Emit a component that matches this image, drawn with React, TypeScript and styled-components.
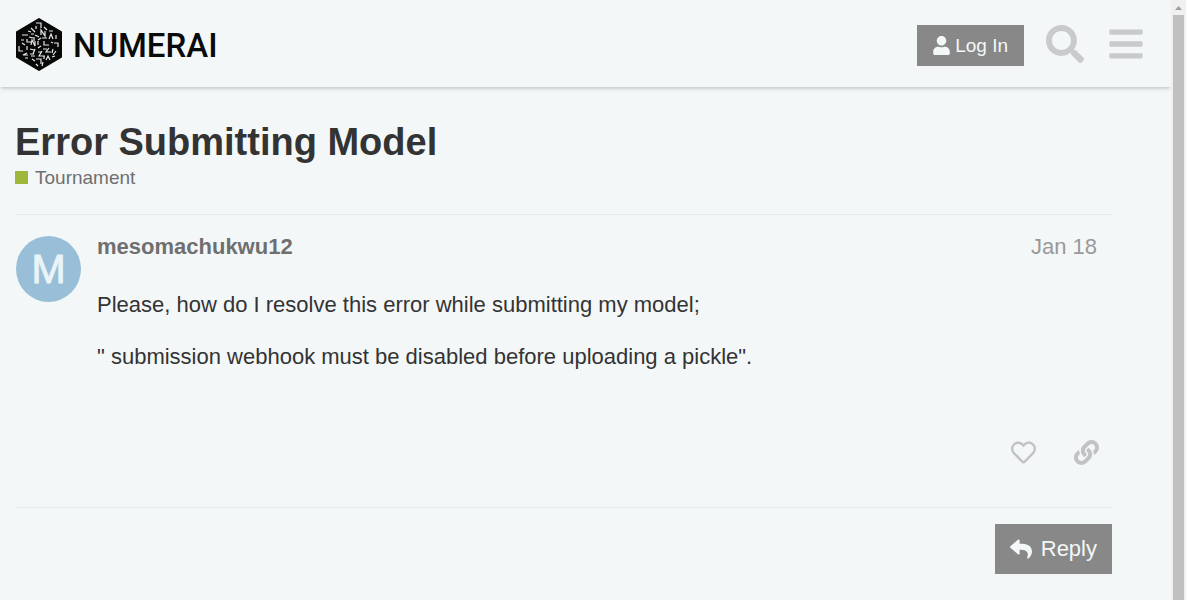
import React from "react";
import styled, { createGlobalStyle } from "styled-components";
import { FaBars, FaLink, FaRegHeart, FaReply, FaSearch, FaUser } from "react-icons/fa";

const GlobalStyle = createGlobalStyle`
  *, *::before, *::after { box-sizing: border-box; }
  body {
    margin: 0;
    background: #f3f7f8;
    color: #333;
    font-family: "Liberation Sans", Arial, sans-serif;
    font-size: 22px;
  }
  h1, p { margin: 0; }
  a { color: inherit; text-decoration: none; }
  button { font-family: inherit; cursor: pointer; }
  svg { display: block; flex: none; }
`;

const Shell = styled.div`
  display: grid;
  grid-template-columns: minmax(0, 1fr) 15px;
  min-height: 100vh;
`;

const Page = styled.div`
  min-width: 0;
`;

const Header = styled.header`
  display: flex;
  align-items: center;
  justify-content: space-between;
  height: 87px;
  padding: 0 26px 0 16px;
  box-shadow: 0 2px 4px -1px rgba(0, 0, 0, 0.25);
`;

const Brand = styled.a`
  display: flex;
  align-items: center;
  gap: 10px;
  padding-top: 2px;
  color: #0a0a0a;
`;

const Wordmark = styled.span`
  padding-top: 2px;
  font: 500 33px/40px Roboto, "Liberation Sans", sans-serif;
`;

const HeaderActions = styled.nav`
  display: flex;
  align-items: flex-start;
  gap: 22px;
  padding-top: 4px;
`;

const SolidButton = styled.button<{ $large?: boolean }>`
  display: flex;
  align-items: center;
  gap: ${(p) => (p.$large ? 9 : 5)}px;
  height: ${(p) => (p.$large ? 50 : 41)}px;
  padding: 0 ${(p) => (p.$large ? 15 : 16)}px;
  border: 0;
  background: #888;
  color: #f3f7f8;
  font-size: ${(p) => (p.$large ? 22 : 19)}px;
`;

const UserIcon = styled(FaUser)`
  width: 17px;
  height: 19px;
`;

const IconButton = styled.button<{ $tone: string }>`
  display: flex;
  padding: 0;
  border: 0;
  background: none;
  color: ${(p) => p.$tone};
`;

const MenuIcons = styled.div`
  display: flex;
  align-items: center;
  gap: 23px;
`;

const Main = styled.main`
  padding: 32px 59px 26px 15px;
`;

const Title = styled.h1`
  font-size: 38px;
  line-height: 46px;
  font-weight: 700;
`;

const Category = styled.a`
  display: flex;
  align-items: center;
  gap: 7px;
  width: fit-content;
  font-size: 19px;
  line-height: 25px;
  color: #6f6f6f;
`;

const Swatch = styled.span`
  width: 13px;
  height: 13px;
  background: #9eb83b;
`;

const Post = styled.article`
  display: flex;
  gap: 16px;
  margin-top: 24px;
  padding: 21px 15px 42px 1px;
  border-top: 1px solid #e7eaeb;
  border-bottom: 1px solid #e7eaeb;
`;

const Avatar = styled.a`
  display: flex;
  flex: none;
  align-items: center;
  justify-content: center;
  width: 65px;
  height: 66px;
  border-radius: 50%;
  background: #98bfd7;
  color: #eaf3f8;
  font-size: 41px;
  line-height: 66px;
  -webkit-text-stroke: 1px #eaf3f8;
`;

const PostBody = styled.div`
  flex: 1;
  min-width: 0;
`;

const PostMeta = styled.div`
  display: flex;
  justify-content: space-between;
  line-height: 22px;
`;

const Author = styled.a`
  font-weight: 700;
  color: #6f6f6f;
`;

const PostDate = styled.a`
  color: #999;
`;

const Content = styled.div`
  display: grid;
  gap: 22px;
  padding: 32px 0 68px;
  line-height: 30px;
`;

const PostActions = styled.div`
  display: flex;
  justify-content: flex-end;
  gap: 38px;
  margin-right: -2px;
`;

const Footer = styled.footer`
  display: flex;
  justify-content: flex-end;
  padding-top: 16px;
`;

const ScrollTrack = styled.div`
  display: flex;
  flex-direction: column;
  padding: 0 2px;
  background: #f0f0f0;
`;

const ScrollArrow = styled.span`
  display: flex;
  align-items: center;
  justify-content: center;
  height: 15px;
`;

const ScrollThumb = styled.span`
  flex: 1;
  background: #c0c0c0;
`;

const HexLogo = () => (
  <svg width="47" height="53" viewBox="0 0 47 53" aria-hidden="true">
    <path d="M23 1 45 14V39L23 52 1 39V14Z" fill="#080808" stroke="#080808" strokeWidth="2" strokeLinejoin="round" />
    <path
      d="M20 5h5v5M20 8v3M15 10l4 4M28 9l3 3M12 13l3 1M6 17h6M18 16h-3M25 17v-5l4 6v-5M33 13h4M19 17l4 2M33 21l2-5 2 5M40 17v4
        M5 22h3M11 21v3h4M13 19l4 1M18 19v4M26 20h5M6 25l3 2M15 27l1-5 3 6v-5M22 23v4M28 23v4h5M38 25h4v4M25 20l-3 2M35 24l2 1
        M3 28v5h4M11 28v4M14 31l4 1M22 30l3-2M27 31h4M11 35l-4 2h5M19 31l-2 5M33 30l-3 4h5M37 31l-1 4M22 34h3M26 33l-3 5h6M40 33l-3 4
        M14 36h4M9 40h3M19 38h-4M16 41l3 2M20 41h5v5M30 42l2-4 2 4M36 39l3-1M28 38v3M20 46l2 2M27 44l-1 4"
      fill="none"
      stroke="#e4e8e9"
      strokeWidth="1.2"
    />
  </svg>
);

export default function App() {
  return (
    <>
      <GlobalStyle />
      <Shell>
        <Page>
          <Header>
            <Brand href="#">
              <HexLogo />
              <Wordmark>NUMERAI</Wordmark>
            </Brand>
            <HeaderActions>
              <SolidButton type="button">
                <UserIcon />
                Log In
              </SolidButton>
              <MenuIcons>
                <IconButton $tone="#c8cacb" type="button" aria-label="Search">
                  <FaSearch size={38} />
                </IconButton>
                <IconButton $tone="#c8cacb" type="button" aria-label="Menu">
                  <FaBars size={38} />
                </IconButton>
              </MenuIcons>
            </HeaderActions>
          </Header>
          <Main>
            <Title>
              <a href="#">Error Submitting Model</a>
            </Title>
            <Category href="#">
              <Swatch />
              Tournament
            </Category>
            <Post>
              <Avatar href="#">M</Avatar>
              <PostBody>
                <PostMeta>
                  <Author href="#">mesomachukwu12</Author>
                  <PostDate href="#">Jan 18</PostDate>
                </PostMeta>
                <Content>
                  <p>Please, how do I resolve this error while submitting my model;</p>
                  <p>" submission webhook must be disabled before uploading a pickle".</p>
                </Content>
                <PostActions>
                  <IconButton $tone="#c0c2c3" type="button" aria-label="Like">
                    <FaRegHeart size={25} />
                  </IconButton>
                  <IconButton $tone="#c0c2c3" type="button" aria-label="Copy link">
                    <FaLink size={25} />
                  </IconButton>
                </PostActions>
              </PostBody>
            </Post>
            <Footer>
              <SolidButton $large type="button">
                <FaReply size={22} />
                Reply
              </SolidButton>
            </Footer>
          </Main>
        </Page>
        <ScrollTrack aria-hidden="true">
          <ScrollArrow>
            <svg width="7" height="4" viewBox="0 0 7 4">
              <path d="M0 4 3.5 0 7 4Z" fill="#a0a0a0" />
            </svg>
          </ScrollArrow>
          <ScrollThumb />
        </ScrollTrack>
      </Shell>
    </>
  );
}
